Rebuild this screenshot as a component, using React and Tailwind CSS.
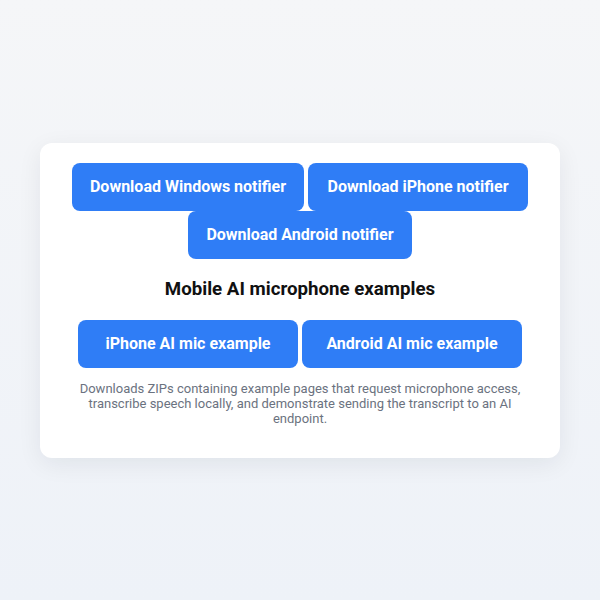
import React from 'react';

const btn =
  'rounded-lg bg-[#2f7df6] py-3 text-center text-base font-bold leading-6 text-white whitespace-nowrap';

export default function App() {
  return (
    <div
      className="flex min-h-screen items-center justify-center bg-gradient-to-b from-[#f5f6f8] to-[#eef2f8]"
      style={{ fontFamily: 'Roboto, "Noto Sans", sans-serif' }}
    >
      <div className="w-[520px] rounded-xl bg-white px-8 pb-8 pt-5 shadow-[0_6px_24px_rgba(15,23,42,0.07)]">
        <div className="flex flex-wrap justify-center gap-x-1">
          <button className={`${btn} w-[232px]`}>Download Windows notifier</button>
          <button className={`${btn} w-[220px]`}>Download iPhone notifier</button>
          <button className={`${btn} w-[224px]`}>Download Android notifier</button>
        </div>

        <h2 className="mt-[18px] text-center text-[18.7px] font-bold leading-6 text-[#111]">
          Mobile AI microphone examples
        </h2>

        <div className="mt-[19px] flex justify-center gap-x-1">
          <button className={`${btn} w-[220px]`}>iPhone AI mic example</button>
          <button className={`${btn} w-[220px]`}>Android AI mic example</button>
        </div>

        <p className="mt-[13px] text-center text-[13px] leading-[15px] text-[#6b7280]">
          Downloads ZIPs containing example pages that request microphone access, transcribe speech locally, and
          demonstrate sending the transcript to an AI endpoint.
        </p>
      </div>
    </div>
  );
}
